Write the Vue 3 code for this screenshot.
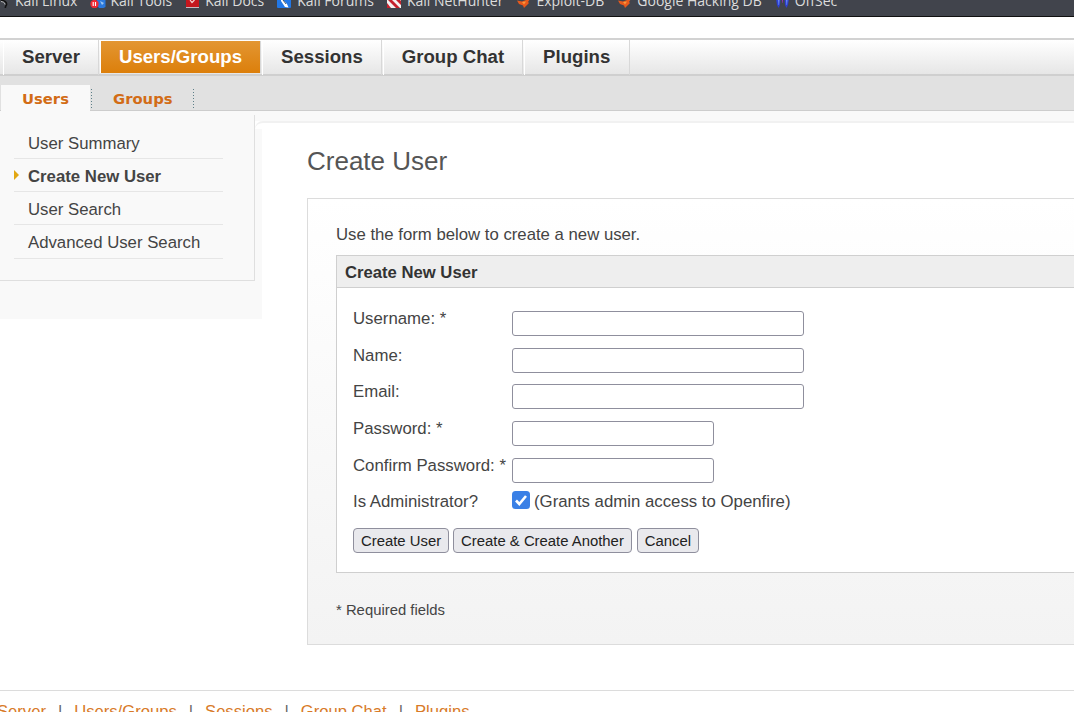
<script setup>
const bookmarks = ['Kali Linux', 'Kali Tools', 'Kali Docs', 'Kali Forums', 'Kali NetHunter', 'Exploit-DB', 'Google Hacking DB', 'OffSec']
const tabs = ['Server', 'Users/Groups', 'Sessions', 'Group Chat', 'Plugins']
const sidebar = ['User Summary', 'Create New User', 'User Search', 'Advanced User Search']
const fields = [
  { label: 'Username: *', short: false },
  { label: 'Name:', short: false },
  { label: 'Email:', short: false },
  { label: 'Password: *', short: true },
  { label: 'Confirm Password: *', short: true },
]
</script>

<template>
<div class="page">
  <div class="bookmarks">
    <div class="bookmarks-row">
      <a v-for="(b, idx) in bookmarks" :key="b" class="bookmark">
        <svg class="fav" width="16" height="16" viewBox="0 0 16 16">
          <template v-if="idx === 0">
            <path d="M6 8c3 .5 6 2 5.500 4.500-.3 1.500-1.500 2-1 3.500" fill="none" stroke="#111" stroke-width="1.600"/>
            <path d="M6 9.500c2 .3 4 1 4 3" fill="none" stroke="#ddd" stroke-width=".8"/>
          </template>
          <template v-else-if="idx === 1">
            <path d="M7 8h8.500v7l-2 1H9l-2-3z" fill="#2a78dc"/>
            <path d="M10 9l4 2-2 2z" fill="#9cc6f2"/>
            <circle cx="4.500" cy="12" r="4.200" fill="#ee2a35"/>
            <path d="M3.200 10v4M5.500 10v4" stroke="#fff" stroke-width="1.100"/>
          </template>
          <template v-else-if="idx === 2">
            <rect x="1" y="6" width="13" height="9" fill="#c5161d"/>
            <path d="M5 8l2 2.500L9.500 8" fill="none" stroke="#f5d0d0" stroke-width="1.200"/>
            <rect x="1" y="15" width="13" height="1" fill="#c9b9c0"/>
          </template>
          <template v-else-if="idx === 3">
            <rect x="0" y="7" width="14" height="9" rx="1" fill="#2277e6"/>
            <path d="M4 6l6 6 1.500 3.500L8 15 4 9z" fill="#fff"/>
            <path d="M6 8l3 4" stroke="#234" stroke-width=".8"/>
          </template>
          <template v-else-if="idx === 4">
            <rect x="0" y="7" width="14" height="9" fill="#f4f1f1"/>
            <path d="M1 8l8 8h4L4 7zM8 7l6 6V9l-2-2z" fill="#c4202c"/>
            <path d="M0 11l4 5H0z" fill="#c4202c"/>
          </template>
          <template v-else-if="idx === 5 || idx === 6">
            <path d="M1 8.500l5 1L10 8l4-1-2 3 1 1-3 3-2 2-1-2.500L3 12z" fill="#e8591c"/>
            <path d="M6 10l4-.5-2 3z" fill="#f79a3c"/>
          </template>
          <template v-else>
            <path d="M1 7h4.500L5 13l-1.500 3L2 13z" fill="#2d3fd0"/>
            <path d="M9.500 7H14l-1 6-1.500 3L10 13z" fill="#2d3fd0"/>
            <path d="M3 8h1.500l-.5 5H3.500zM11 8h1.500L12 13h-.5z" fill="#6a8cf0"/>
            <path d="M6.800 7h1.200L7.700 11h-.4z" fill="#a02cc0"/>
          </template>
        </svg>
        <span class="bookmark-name">{{ b }}</span>
      </a>
    </div>
  </div>

  <nav class="tabs">
    <a v-for="t in tabs" :key="t" :class="{ tab: true, active: t === 'Users/Groups' }">{{ t }}</a>
  </nav>

  <div class="subtabs">
    <a class="subtab active">Users</a>
    <span class="dots"></span>
    <a class="subtab">Groups</a>
    <span class="dots"></span>
  </div>

  <div class="body">
    <aside class="sidebar">
      <div class="sidebar-inner">
        <ul class="side-list">
          <li v-for="s in sidebar" :key="s" :class="{ 'side-item': true, current: s === 'Create New User' }">{{ s }}</li>
        </ul>
      </div>
    </aside>

    <main class="main">
      <h1 class="title">Create User</h1>
      <section class="panel">
        <p class="intro">Use the form below to create a new user.</p>
        <div class="box">
          <div class="box-head">Create New User</div>
          <form class="form" @submit.prevent>
            <div v-for="f in fields" :key="f.label" class="row">
              <label class="label">{{ f.label }}</label>
              <input type="text" :class="{ input: true, short: f.short }">
            </div>
            <div class="row admin">
              <label class="label">Is Administrator?</label>
              <span class="check">
                <svg width="18" height="18" viewBox="0 0 18 18">
                  <rect width="18" height="18" rx="3.500" fill="#3a80e6"/>
                  <path d="M4 9.500l3.300 3.500L14 5" fill="none" stroke="#fff" stroke-width="2.600"/>
                </svg>
              </span>
              <span class="hint">(Grants admin access to Openfire)</span>
            </div>
            <div class="buttons">
              <button class="btn">Create User</button>
              <button class="btn">Create &amp; Create Another</button>
              <button class="btn cancel">Cancel</button>
            </div>
          </form>
        </div>
        <p class="required">* Required fields</p>
      </section>
    </main>
  </div>

  <footer class="footer">
    <template v-for="(t, idx) in tabs" :key="t">
      <span v-if="idx" class="sep">|</span>
      <a class="foot-link">{{ t }}</a>
    </template>
  </footer>
</div>
</template>

<style scoped>
.page {
  position: relative;
  width: 1074px;
  height: 712px;
  overflow: hidden;
  background: #fff;
  font-family: "Liberation Sans", Arial, sans-serif;
  color: #444;
}
.bookmarks {
  height: 16px;
  background: #41444c;
  border-bottom: 1px solid #111;
  overflow: hidden;
}
.bookmarks-row {
  display: flex;
  gap: 13px;
  margin-top: -7px;
  margin-left: -5px;
  white-space: nowrap;
}
.bookmark {
  display: flex;
  align-items: center;
  gap: 4px;
  height: 16px;
  color: #dcdcdc;
  font-family: "Open Sans", sans-serif;
  font-size: 14px;
  line-height: 16px;
}
.fav {
  flex: none;
  margin-top: -2px;
}
.tabs {
  display: flex;
  margin-top: 21px;
  height: 38px;
  box-sizing: border-box;
  padding-left: 3px;
  gap: 1px;
  border-top: 2px solid #d2d2d2;
  border-bottom: 2px solid #cfcfcf;
  background: linear-gradient(#fff, #e6e6e6);
}
.tab {
  padding: 0 18px;
  border-right: 1px solid #d8d8d8;
  border-left: 1px solid #fff;
  font-size: 18.620px;
  font-weight: 700;
  line-height: 34px;
  color: #333;
  height: 35px;
}
.tab:last-child {
  padding-right: 19px;
}
.tab.active {
  background: linear-gradient(#e39632, #dc7f0b);
  color: #fff;
  margin-top: 1px;
  height: 32px;
  line-height: 32px;
}
.subtabs {
  display: flex;
  align-items: flex-start;
  height: 35px;
  box-sizing: border-box;
  padding-top: 9px;
  padding-left: 1px;
  background: #e1e1e1;
  border-bottom: 1px solid #cdcdcd;
}
.subtab {
  padding: 0 19px 0 22px;
  font-family: "DejaVu Sans", sans-serif;
  font-size: 14.800px;
  font-weight: 700;
  line-height: 28px;
  color: #d26c16;
}
.subtab.active {
  box-sizing: border-box;
  width: 89px;
  height: 27px;
  padding: 0 0 0 21px;
  background: #f9f9f9;
  position: relative;
}
.dots {
  width: 1px;
  height: 19px;
  margin: 4px -1px 0 1px;
  background: linear-gradient(#5d7f88 33%, transparent 33%) 0 0 / 1px 3px;
}
.body {
  display: flex;
  height: 579px;
  background: linear-gradient(#f9f9f9 10px, #fff 10px);
}
.sidebar {
  width: 255px;
  height: 208px;
  flex: none;
  background: #f9f9f9;
}
.sidebar-inner {
  box-sizing: border-box;
  height: 166px;
  margin-top: 4px;
  padding: 11px 0 0 14px;
  border-right: 1px solid #dfdfdf;
  border-bottom: 1px solid #dfdfdf;
}
.side-list {
  width: 209px;
  margin: 0;
  padding: 0;
  list-style: none;
}
.side-item {
  position: relative;
  box-sizing: border-box;
  height: 33px;
  padding: 1px 0 0 14px;
  border-bottom: 1px solid #e6e6e6;
  font-size: 16.750px;
  line-height: 33px;
  color: #444;
}
.side-item:last-child {
  height: 34px;
}
.side-item.current {
  font-weight: 700;
}
.side-item.current::before {
  content: "";
  position: absolute;
  left: 0;
  top: 11px;
  border-left: 5px solid #e2a712;
  border-top: 5.500px solid transparent;
  border-bottom: 5.500px solid transparent;
}
.main {
  position: relative;
  flex: 1;
  min-width: 0;
  margin-top: 10px;
  padding-left: 52px;
  border-top: 2px solid #f1f1f1;
  border-top-left-radius: 8px;
  background: #fff;
}
.main::before {
  content: "";
  position: absolute;
  left: 0;
  top: 6px;
  width: 7px;
  height: 190px;
  background: #f9f9f9;
}
.title {
  margin: 0;
  padding-top: 23px;
  font-size: 26px;
  font-weight: 400;
  line-height: 30px;
  color: #555;
}
.panel {
  box-sizing: border-box;
  width: 800px;
  height: 447px;
  margin-top: 22px;
  padding: 26px 28px 0;
  border: 1px solid #dcdcdc;
  background: linear-gradient(#fff, #f3f3f3);
}
.intro {
  margin: 0;
  font-size: 16.740px;
  line-height: 20px;
  color: #444;
}
.box {
  box-sizing: border-box;
  height: 318px;
  margin-top: 10px;
  border: 1px solid #cfcfcf;
  background: #fff;
}
.box-head {
  box-sizing: border-box;
  height: 32px;
  padding-left: 8px;
  border-bottom: 1px solid #cfcfcf;
  background: #eee;
  font-size: 16.670px;
  font-weight: 700;
  line-height: 33px;
  color: #333;
}
.form {
  padding: 23px 0 0 16px;
}
.row {
  display: flex;
  align-items: flex-start;
  margin-bottom: 11.670px;
}
.label {
  width: 159px;
  flex: none;
  font-size: 16.800px;
  line-height: 15px;
  color: #444;
}
.input {
  box-sizing: border-box;
  width: 292px;
  height: 25px;
  padding: 0 6px;
  border: 1px solid #8f8f9d;
  border-radius: 3px;
  background: #fff;
}
.input.short {
  width: 202px;
}
.admin {
  margin-top: -3.670px;
  margin-bottom: 17px;
}
.admin .label {
  padding-top: 2px;
  line-height: 18px;
}
.check {
  display: flex;
  flex: none;
  margin-right: 4px;
}
.hint {
  padding-top: 2px;
  font-size: 16.800px;
  line-height: 18px;
  color: #444;
}
.buttons {
  display: flex;
  gap: 4px;
}
.btn {
  box-sizing: border-box;
  height: 25px;
  padding: 2px 7px 0;
  border: 1px solid #8f8f9d;
  border-radius: 4px;
  background: #e9e9ed;
  font-family: inherit;
  font-size: 14.870px;
  color: #222;
}
.btn.cancel {
  margin-left: 1px;
}
.required {
  margin: 28px 0 0;
  font-size: 14.850px;
  line-height: 18px;
  color: #444;
}
.footer {
  display: flex;
  align-items: flex-start;
  box-sizing: border-box;
  height: 40px;
  padding: 11px 0 0;
  margin-left: -3px;
  border-top: 1px solid #dcdcdc;
  font-size: 16.630px;
  line-height: 20px;
  white-space: nowrap;
}
.foot-link {
  color: #d87a28;
}
.sep {
  margin: 0 12px;
  color: #666;
}
</style>
